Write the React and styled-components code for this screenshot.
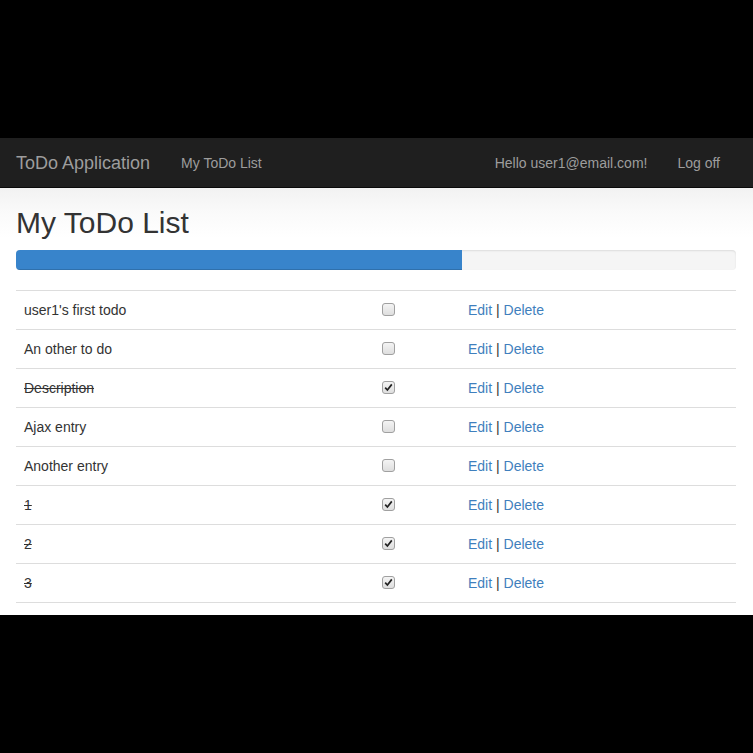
import React from "react"
import styled, { createGlobalStyle } from "styled-components"

//Global
const GlobalStyle = createGlobalStyle`
  html, body {
    margin: 0;
    padding: 0;
    background: #000;
  }
  body {
    font-family: "Liberation Sans", Arial, sans-serif;
    font-size: 14px;
    line-height: 20px;
    color: #333;
  }
`

//Styled Components
const Screen = styled.div`
  width: 753px;
  height: 753px;
  display: flex;
  flex-direction: column;
  justify-content: center;
`

const Page = styled.div`
  height: 477px;
  background: #fff;
  display: flex;
  flex-direction: column;
`

const Navbar = styled.nav`
  height: 49px;
  flex-shrink: 0;
  background: #1f1f1f;
  border-bottom: 1px solid #0a0a0a;
  display: flex;
  align-items: center;
  padding: 0 0 0 16px;
  .brand {
    font-size: 18px;
    color: #9d9d9d;
    margin-right: 31px;
  }
  .spacer {
    flex: 1;
  }
`

const NavLink = styled.a`
  font-size: 14px;
  color: #9d9d9d;
  text-decoration: none;
  margin-right: ${props => props.$gap || 0}px;
`

const Content = styled.div`
  flex: 1;
  padding: 0 17px 0 16px;
  background: linear-gradient(to bottom, #f2f2f2 0px, #fafafa 25px, #fff 50px);
`

const Title = styled.h1`
  font-size: 30px;
  font-weight: 500;
  line-height: 33px;
  margin: 18px 0 11px;
  color: #333;
`

const Progress = styled.div`
  height: 20px;
  border-radius: 4px;
  background: #f5f5f5;
  box-shadow: inset 0 1px 2px rgba(0, 0, 0, 0.1);
  overflow: hidden;
  margin-bottom: 20px;
`

const ProgressFill = styled.div`
  height: 100%;
  background: #3884cb;
  box-shadow: inset 0 -1px 0 rgba(0, 0, 0, 0.15);
`

const Table = styled.table`
  width: 100%;
  border-collapse: collapse;
  td {
    height: 38px;
    padding: 0 8px;
    border-top: 1px solid #ddd;
    vertical-align: middle;
  }
  tr:last-child td {
    border-bottom: 1px solid #ddd;
  }
  .text {
    width: 343px;
  }
  .check {
    width: 69px;
  }
`

const TodoText = styled.span`
  text-decoration: ${props => (props.$done ? "line-through" : "none")};
`

const Box = styled.span`
  display: inline-block;
  box-sizing: border-box;
  width: 13px;
  height: 13px;
  margin: -3px 0 0 -1px;
  border: 1px solid #a0a0a0;
  border-radius: 3px;
  background: linear-gradient(to bottom, #f4f4f4, #dedede);
  position: relative;
  vertical-align: middle;
  svg {
    position: absolute;
    left: 1px;
    top: 1px;
  }
`

const Link = styled.a`
  color: #3f7fbd;
  text-decoration: none;
`

const Checkbox = ({ checked }) => (
  <Box>
    {checked && (
      <svg width="9" height="9" viewBox="0 0 9 9">
        <path
          d="M1.2 4.6 L3.4 7 L7.8 1.4"
          fill="none"
          stroke="#222"
          strokeWidth="1.7"
        />
      </svg>
    )}
  </Box>
)

const todos = [
  { text: "user1's first todo", done: false },
  { text: "An other to do", done: false },
  { text: "Description", done: true },
  { text: "Ajax entry", done: false },
  { text: "Another entry", done: false },
  { text: "1", done: true },
  { text: "2", done: true },
  { text: "3", done: true },
]

const App = () => {
  return (
    <Screen>
      <GlobalStyle />
      <Page>
        <Navbar>
          <span className="brand">ToDo Application</span>
          <NavLink href="#">My ToDo List</NavLink>
          <span className="spacer" />
          <NavLink href="#" $gap={30}>
            Hello user1@email.com!
          </NavLink>
          <NavLink href="#" $gap={33}>
            Log off
          </NavLink>
        </Navbar>
        <Content>
          <Title>My ToDo List</Title>
          <Progress>
            <ProgressFill style={{ width: "62%" }} />
          </Progress>
          <Table>
            <tbody>
              {todos.map((todo, i) => (
                <tr key={i}>
                  <td className="text">
                    <TodoText $done={todo.done}>{todo.text}</TodoText>
                  </td>
                  <td className="check">
                    <Checkbox checked={todo.done} />
                  </td>
                  <td>
                    <Link href="#">Edit</Link> | <Link href="#">Delete</Link>
                  </td>
                </tr>
              ))}
            </tbody>
          </Table>
        </Content>
      </Page>
    </Screen>
  )
}

export default App
